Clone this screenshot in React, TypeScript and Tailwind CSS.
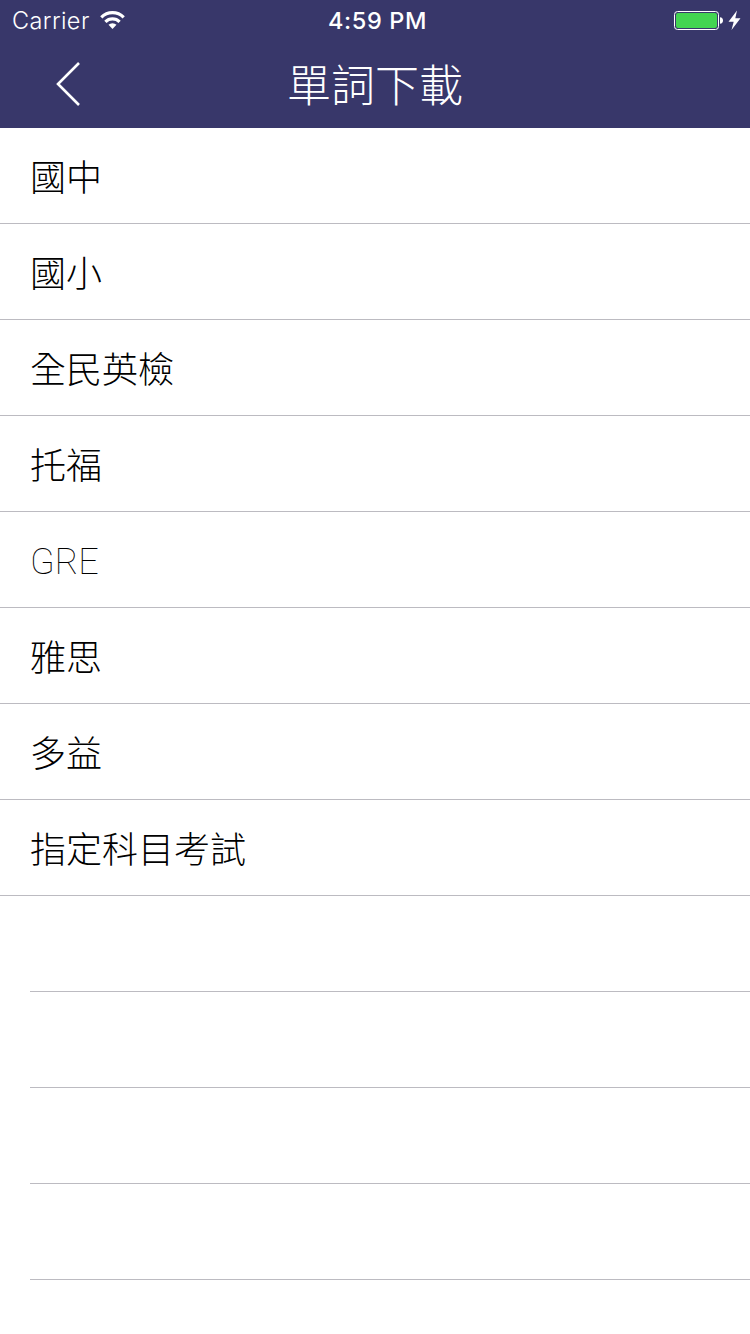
import clsx from "clsx"

const words = ["國中", "國小", "全民英檢", "托福", "GRE", "雅思", "多益", "指定科目考試"]

const emptyRows = [0, 1, 2, 3]

const isLatin = (word: string) => /^[A-Z]+$/.test(word)

function StatusBar() {
  return (
    <div className="flex h-10 items-center justify-between pl-[12px] pr-[9px] font-['Inter','Liberation_Sans',sans-serif] text-white">
      <div className="flex w-[240px] items-center gap-[10px]">
        <span className="w-[78px] pt-[2px] text-[23.5px] font-[350] leading-none tracking-[0.4px]">Carrier</span>
        <svg width="25" height="20" viewBox="0 0 25 20" fill="none" stroke="white" strokeWidth="3.2">
          <path d="M1.3 7.3a15.8 15.8 0 0 1 22.4 0" />
          <path d="M5.4 11.8a10 10 0 0 1 14.2 0" />
          <path d="M12.5 19l-4-4.2a5.8 5.8 0 0 1 8 0z" fill="white" stroke="none" />
        </svg>
      </div>
      <span className="pl-[2px] pt-[2px] text-[23.5px] font-medium leading-none tracking-[0.6px]">4:59 PM</span>
      <div className="flex w-[240px] items-center justify-end">
        <svg width="67" height="22" viewBox="0 0 67 22">
          <rect x="0.5" y="2.5" width="44" height="18" rx="3" fill="none" stroke="white" />
          <rect x="2" y="4" width="41" height="15" rx="2" fill="#43d551" />
          <path d="M46 8.2q3 0.3 3 3.3t-3 3.3z" fill="white" />
          <path d="M63 1.5L54.5 12.8h5.2L57.5 21L66.5 9.3h-5.2z" fill="white" />
        </svg>
      </div>
    </div>
  )
}

export default function App() {
  return (
    <div className="h-[1334px] w-[750px] overflow-hidden bg-white font-['Roboto','Noto_Sans_CJK_TC',sans-serif]">
      <header className="h-32 bg-[#38376a]">
        <StatusBar />
        <div className="grid h-[88px] grid-cols-[1fr_auto_1fr] items-center text-white">
          <svg className="ml-[55px]" width="26" height="46" viewBox="0 0 26 46" fill="none" stroke="white" strokeWidth="2.6">
            <path d="M24 2L3 23l21 21" />
          </svg>
          <h1 className="pt-[6px] text-[44px] font-light leading-none">單詞下載</h1>
        </div>
      </header>

      <ul>
        {words.map((word) => (
          <li
            key={word}
            className={clsx(
              "flex h-24 items-center border-b border-[#bcbbc1] pl-[30px] text-[36px] leading-none text-black",
              isLatin(word) ? "pt-1 font-[130]" : "pt-[6px] font-light"
            )}
          >
            {word}
          </li>
        ))}
        {emptyRows.map((row) => (
          <li key={row} className="ml-[30px] h-24 border-b border-[#bcbbc1]" />
        ))}
      </ul>
    </div>
  )
}
